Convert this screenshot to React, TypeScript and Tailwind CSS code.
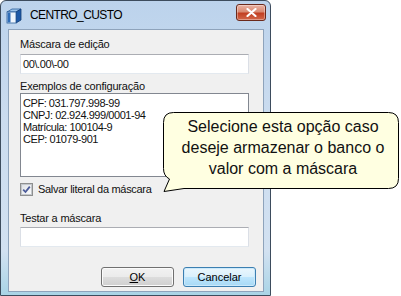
import React from "react";

const F = "font-['Liberation_Sans',Arial,sans-serif]";

function TitleIcon() {
  return (
    <svg width="17" height="16" viewBox="0 0 17 16">
      <polygon points="2,4 7,1 16,1 11,4" fill="#9cc3ea" stroke="#2a5d9a" strokeWidth="0.8" />
      <polygon points="11,4 16,1 16,12 11,15" fill="#1e5aa8" stroke="#123c73" strokeWidth="0.8" />
      <rect x="2" y="4" width="9" height="11" fill="#eef5fc" stroke="#2a5d9a" strokeWidth="0.8" />
      <rect x="2.5" y="4.5" width="3" height="10" fill="#2f6db8" />
    </svg>
  );
}

function CloseBtn() {
  return (
    <div className="w-[30px] h-[17px] rounded-[3px] border border-[#6b2a1c] bg-[linear-gradient(to_bottom,#eab3a4_0%,#d98a72_45%,#c23f22_55%,#d2684a_100%)] flex items-center justify-center shadow-[inset_0_0_0_1px_rgba(255,255,255,0.35)]">
      <svg width="11" height="9" viewBox="0 0 11 9">
        <path d="M1.5 1 L9.5 8 M9.5 1 L1.5 8" stroke="#ffffff" strokeWidth="2.2" strokeLinecap="round" />
      </svg>
    </div>
  );
}

function Check() {
  return (
    <div className="w-[13px] h-[13px] border border-[#8e8f8f] bg-white flex items-center justify-center">
      <div className="w-[11px] h-[11px] border border-[#c3c7cc] bg-[linear-gradient(135deg,#dfe2e6,#fafbfb)] flex items-center justify-center">
        <svg width="9" height="9" viewBox="0 0 9 9">
          <path d="M1.2 4.6 L3.5 7 L7.8 1.6" stroke="#4b5a99" strokeWidth="1.8" fill="none" />
        </svg>
      </div>
    </div>
  );
}

function Btn({ children, primary }: { children: React.ReactNode; primary?: boolean }) {
  return (
    <div
      className={
        "w-[73px] h-[20px] rounded-[3px] border flex items-center justify-center text-[11px] text-black " +
        (primary
          ? "border-[#3c7fb1] bg-[linear-gradient(to_bottom,#eaf6fd_0%,#d9f0fc_50%,#bee6fd_50%,#a7d9f5_100%)] shadow-[inset_0_0_0_1px_#cbe9fb]"
          : "border-[#707070] bg-[linear-gradient(to_bottom,#f2f2f2_0%,#ebebeb_50%,#dddddd_50%,#cfcfcf_100%)] shadow-[inset_0_0_0_1px_#fbfbfb]")
      }
    >
      {children}
    </div>
  );
}

export default function App() {
  return (
    <div className={"relative w-[401px] h-[296px] bg-white overflow-hidden " + F}>
      <div className="w-[271px] h-[296px] border border-[#3d4c5d] rounded-t-[6px] bg-[linear-gradient(to_bottom,#bcd3ec_0%,#cbdcef_40%,#d2e1f1_85%,#a9d4e6_100%)] flex flex-col pl-[7px] pr-[6px] pb-[3px]">
        <div className="h-[28px] flex items-center">
          <div className="ml-[-3px] mt-[1px]"><TitleIcon /></div>
          <div className="ml-[8px] text-[12px] tracking-[-0.6px] text-black leading-[14px]">CENTRO_CUSTO</div>
          <div className="ml-auto mr-[-2px] mt-[-6px]"><CloseBtn /></div>
        </div>
        <div className="flex-1 bg-[#f0f0f0] border border-[#8ea3bb] flex flex-col pl-[11px] pr-[14px] text-[11px] tracking-[-0.2px] text-[#111]">
          <div className="mt-[8px] h-[13px] leading-[13px]">Máscara de edição</div>
          <div className="mt-[3px] h-[20px] bg-white border border-[#abadb3] border-l-[#dbdfe6] border-r-[#dbdfe6] border-b-[#e3e9ef] pl-[2px] leading-[18px] tracking-[-0.4px]">00\.00\-00</div>
          <div className="mt-[6px] h-[13px] leading-[13px]">Exemplos de configuração</div>
          <div className="h-[84px] bg-white border border-[#828790] pl-[2px] pt-[3px] leading-[12px] tracking-[-0.45px]">
            <div>CPF: 031.797.998-99</div>
            <div>CNPJ: 02.924.999/0001-94</div>
            <div>Matrícula: 100104-9</div>
            <div>CEP: 01079-901</div>
          </div>
          <div className="mt-[6px] h-[13px] flex items-center">
            <Check />
            <div className="ml-[5px] leading-[13px] tracking-[-0.3px]">Salvar literal da máscara</div>
          </div>
          <div className="mt-[16px] h-[13px] leading-[13px]">Testar a máscara</div>
          <div className="mt-[2px] h-[20px] bg-white border border-[#abadb3] border-l-[#dbdfe6] border-r-[#dbdfe6] border-b-[#e3e9ef]"></div>
          <div className="mt-[20px] flex justify-end gap-[9px] mr-[-7px] tracking-normal">
            <Btn><span className="underline">O</span>K</Btn>
            <Btn primary>Cancelar</Btn>
          </div>
        </div>
      </div>

      <div className="absolute left-[155px] top-[105px] w-[246px] h-[90px]">
        <svg className="absolute inset-0" width="246" height="90" viewBox="155 105 246 90">
          <path
            d="M173.5 112.5 H388.5 Q398.5 112.5 398.5 122.5 V178.5 Q398.5 188.5 388.5 188.5 H184 L164 191.5 L169.5 179 Q163.5 176 163.5 168.5 V122.5 Q163.5 112.5 173.5 112.5 Z"
            fill="#ffffe1"
            stroke="#000000"
            strokeWidth="1"
          />
        </svg>
        <div className="absolute left-[10px] top-[11px] w-[236px] text-center text-[16px] leading-[21px] text-[#111]">
          Selecione esta opção caso
          <br />
          deseje armazenar o banco o
          <br />
          valor com a máscara
        </div>
      </div>
    </div>
  );
}
